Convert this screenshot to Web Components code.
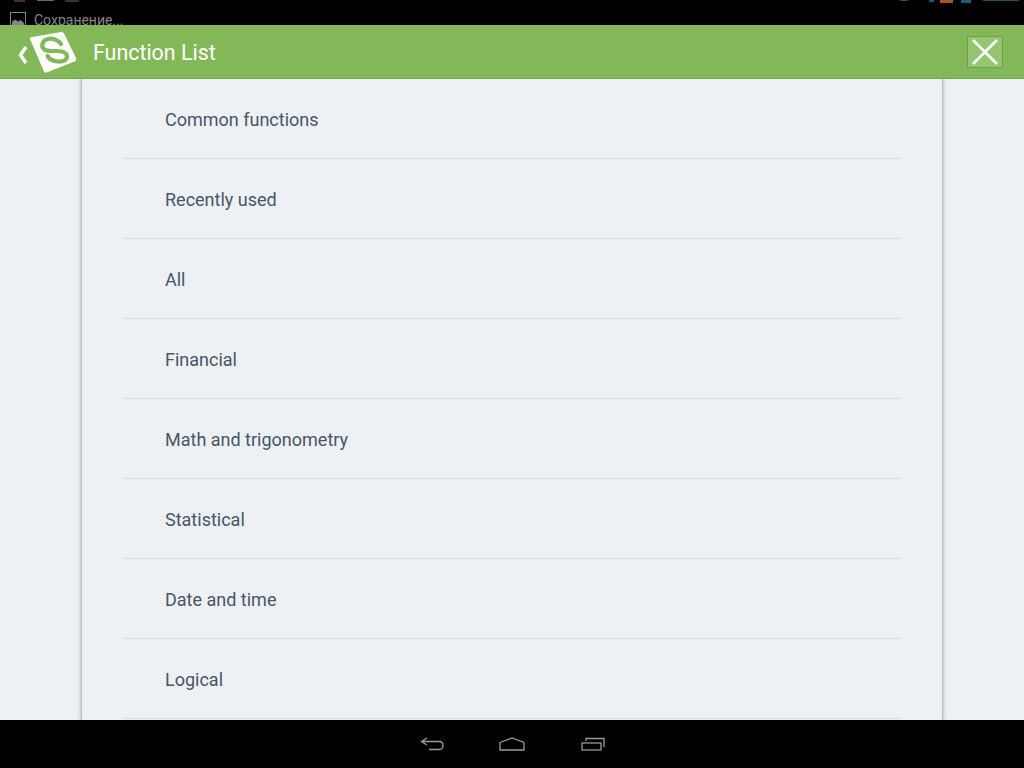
<!DOCTYPE html>
<html>
<head>
<meta charset="utf-8">
<style>
  html, body { margin: 0; padding: 0; width: 1024px; height: 768px; overflow: hidden; background: #000; }
  body { display: flex; flex-direction: column; font-family: Roboto, "Liberation Sans", sans-serif; }
</style>
</head>
<body>
<status-strip></status-strip>
<title-bar heading="Function List"></title-bar>
<function-panel>
  <function-row>Common functions</function-row>
  <function-row>Recently used</function-row>
  <function-row>All</function-row>
  <function-row>Financial</function-row>
  <function-row>Math and trigonometry</function-row>
  <function-row>Statistical</function-row>
  <function-row>Date and time</function-row>
  <function-row>Logical</function-row>
</function-panel>
<nav-strip></nav-strip>

<script>
  class StatusStrip extends HTMLElement {
    constructor() {
      super();
      // no overflow clip here, the title bar lies over the bottom of the note
      this.attachShadow({mode: 'open'}).innerHTML = `
        <style>
          :host { display: block; height: 25px; background: #000; position: relative; flex: none; }
          .bits { position: absolute; inset: 0; }
          .note { display: flex; align-items: flex-start; gap: 8px; padding: 12px 0 0 10px; color: #858585; font-size: 14px; line-height: 16px; }
          svg { display: block; flex: none; }
        </style>
        <svg class="bits" width="1024" height="25">
          <rect x="14" y="0" width="11" height="2" fill="#4a2a2a"/>
          <rect x="37" y="0" width="17" height="1" fill="#666"/>
          <rect x="65" y="0" width="14" height="2" fill="#333"/>
          <rect x="900" y="0" width="8" height="1" fill="#444"/>
          <rect x="929" y="0" width="5" height="2" fill="#1f5a78"/>
          <rect x="940" y="0" width="13" height="3" fill="#a8561a"/>
          <rect x="961" y="0" width="10" height="3" fill="#1f5a78"/>
          <rect x="983" y="0" width="36" height="1" fill="#234f63"/>
        </svg>
        <div class="note">
          <svg width="16" height="16" viewBox="0 0 16 16">
            <rect x="0.5" y="0.5" width="15" height="15" fill="none" stroke="#858585"/>
            <path d="M2 13V10L5 7.5 8 9.5 10.5 8 14 11V13Z" fill="#858585"/>
          </svg>
          <span>Сохранение...</span>
        </div>`;
    }
  }
  customElements.define('status-strip', StatusStrip);

  class TitleBar extends HTMLElement {
    constructor() {
      super();
      this.attachShadow({mode: 'open'}).innerHTML = `
        <style>
          :host { display: flex; align-items: center; height: 54px; box-sizing: border-box; flex: none;
                  background: #83b858; border-bottom: 1px solid #74a64b; position: relative; z-index: 2; }
          .back { margin: 6px 0 0 17px; display: block; }
          .logo { margin-left: 1px; display: block; }
          h1 { margin: 2px 0 0 16px; flex: 1; font: 400 21.4px/24px Roboto, "Liberation Sans", sans-serif; color: #fff; }
          .close { width: 36px; height: 32px; box-sizing: border-box; margin-right: 21px; border: 1px solid #6f9f4c;
                   background: #96c572; display: flex; align-items: center; justify-content: center; }
        </style>
        <svg class="back" width="11" height="18" viewBox="0 0 11 18">
          <path d="M9 1 3.500 9 9 17" fill="none" stroke="#fff" stroke-width="3.500"/>
        </svg>
        <svg class="logo" width="48" height="42" viewBox="0 0 48 42">
          <path d="M1.500 6.300 32.500 1Q34 0.800 35 2.500L47 27Q48 29.500 45.500 30.500L17.500 41.500Q15.500 42 15 40.500L1 8Q0.800 6.500 1.500 6.300Z" fill="#fff"/>
          <path d="M32 13C29 8.500 23 7 19 8 14 9 12 14 14 17 16 20.500 22 20 27 20 33 20 38 21 38 25.500 38 29.500 33 31 29 30.500 24 30 20 28 18.500 25"
                fill="none" stroke="#83b858" stroke-width="4.200" stroke-linecap="round"/>
        </svg>
        <h1></h1>
        <div class="close">
          <svg width="26" height="26" viewBox="0 0 26 26">
            <path d="M1 1 25 25M25 1 1 25" stroke="#fff" stroke-width="2.500"/>
          </svg>
        </div>`;
      this.shadowRoot.querySelector('h1').textContent = this.getAttribute('heading');
    }
  }
  customElements.define('title-bar', TitleBar);

  class FunctionPanel extends HTMLElement {
    constructor() {
      super();
      this.attachShadow({mode: 'open'}).innerHTML = `
        <style>
          :host { display: block; flex: 1; min-height: 0; overflow: hidden; background: #edf1f4; }
          .sheet { width: 862px; height: 100%; box-sizing: border-box; margin-left: 81px; padding: 0 41px;
                   background: #edf1f4; border-left: 1px solid #b9bdc1; border-right: 1px solid #b9bdc1;
                   box-shadow: 0 0 4px rgba(90, 96, 104, .45); }
        </style>
        <div class="sheet"><slot></slot></div>`;
    }
  }
  customElements.define('function-panel', FunctionPanel);

  class FunctionRow extends HTMLElement {
    constructor() {
      super();
      this.attachShadow({mode: 'open'}).innerHTML = `
        <style>
          :host { display: flex; align-items: center; height: 80px; box-sizing: border-box; padding: 3px 0 0 42px;
                  border-bottom: 1px solid #d2d8e4; color: #475668; font: 400 18px/24px Roboto, "Liberation Sans", sans-serif; }
        </style>
        <slot></slot>`;
    }
  }
  customElements.define('function-row', FunctionRow);

  class NavStrip extends HTMLElement {
    constructor() {
      super();
      this.attachShadow({mode: 'open'}).innerHTML = `
        <style>
          :host { display: flex; justify-content: center; align-items: center; height: 48px; padding-left: 1px; background: #000; flex: none; box-sizing: border-box; }
          svg { display: block; }
          .home { margin: 0 56px 0 55px; }
        </style>
        <svg width="24" height="14" viewBox="0 0 24 14" fill="none" stroke="#9a9a9a" stroke-width="1.300">
          <path d="M7 1 1.500 4.500 7 8M1.500 4.500H19Q23 4.500 23 8.500 23 12.500 19 12.500H9"/>
        </svg>
        <svg class="home" width="26" height="14" viewBox="0 0 26 14" fill="none" stroke="#9a9a9a" stroke-width="1.300">
          <path d="M1 5.500 13 1 25 5.500V13H1Z"/>
        </svg>
        <svg width="24" height="14" viewBox="0 0 24 14" fill="none" stroke="#9a9a9a" stroke-width="1.300">
          <rect x="1" y="6" width="19" height="7"/>
          <path d="M5 4V1.500H23V10"/>
        </svg>`;
    }
  }
  customElements.define('nav-strip', NavStrip);
</script>
</body>
</html>
